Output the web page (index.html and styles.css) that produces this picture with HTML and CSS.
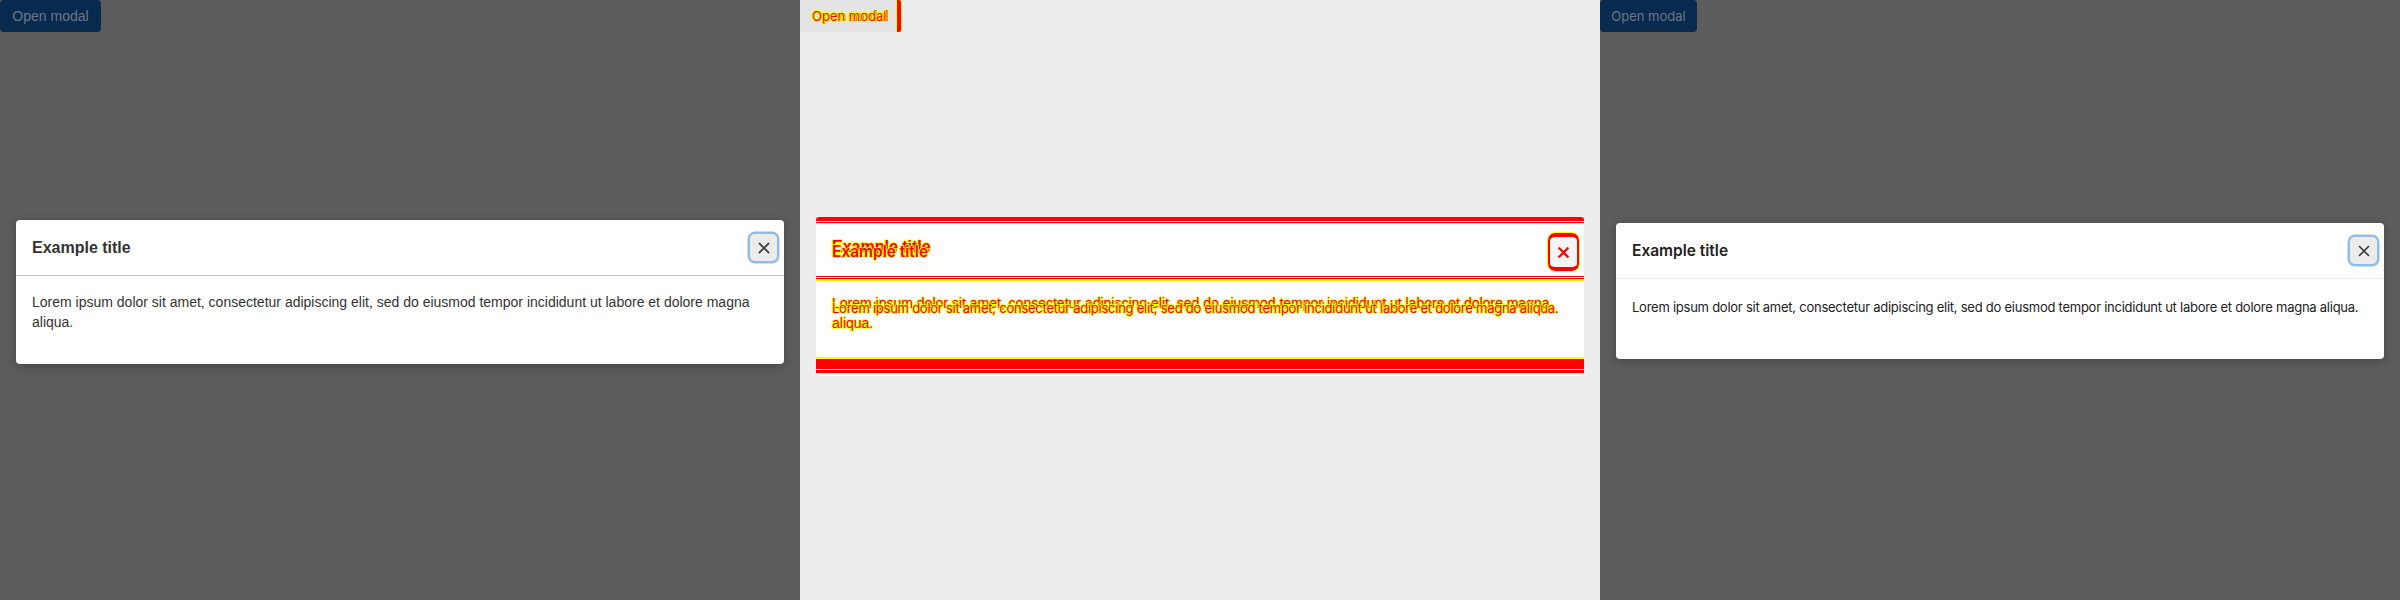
FILE: index.html
```html
<!DOCTYPE html>
<html>
<head>
<meta charset="utf-8">
<link rel="stylesheet" href="styles.css">
</head>
<body>
<div class="panels">
  <section class="panel panel-left">
    <button class="open-btn open-btn-left">Open modal</button>
    <div class="modal modal-left">
      <div class="modal-header">
        <h2 class="modal-title">Example title</h2>
        <button class="close-btn" aria-label="Close">
          <svg width="12" height="12" viewBox="0 0 12 12"><path d="M1.5 1.5 L10.5 10.5 M10.5 1.5 L1.5 10.5" stroke="#444" stroke-width="1.8" stroke-linecap="round"/></svg>
        </button>
      </div>
      <div class="modal-body">
        <p>Lorem ipsum dolor sit amet, consectetur adipiscing elit, sed do eiusmod tempor incididunt ut labore et dolore magna aliqua.</p>
      </div>
    </div>
  </section>

  <section class="panel panel-diff">
    <div class="diff-btn">
      <span class="diff-text diff-btn-a">Open modal</span>
      <span class="diff-text diff-btn-b">Open modal</span>
      <span class="diff-btn-edge"></span>
    </div>
    <div class="diff-modal">
      <div class="stripe s-top1"></div>
      <div class="stripe s-top2"></div>
      <div class="stripe s-top3"></div>
      <div class="stripe s-top4"></div>
      <div class="stripe s-div1"></div>
      <div class="stripe s-div2"></div>
      <div class="stripe s-div3"></div>
      <div class="stripe s-bot1"></div>
      <div class="stripe s-bot2"></div>
      <div class="stripe s-bot3"></div>
      <div class="stripe s-bot4"></div>
      <div class="stripe s-bot5"></div>
      <div class="diff-title diff-title-a diff-text">Example title</div>
      <div class="diff-title diff-title-b diff-text">Example title</div>
      <div class="diff-body diff-body-a diff-text">Lorem ipsum dolor sit amet, consectetur adipiscing elit, sed do eiusmod tempor incididunt ut labore et dolore magna aliqua.</div>
      <div class="diff-body diff-body-b diff-text">Lorem ipsum dolor sit amet, consectetur adipiscing elit, sed do eiusmod tempor incididunt ut labore et dolore magna aliqua.</div>
      <div class="diff-close">
        <svg width="11" height="11" viewBox="0 0 12 12"><path d="M1.5 1.5 L10.5 10.5 M10.5 1.5 L1.5 10.5" stroke="#ff0000" stroke-width="2.4" stroke-linecap="square"/></svg>
      </div>
    </div>
  </section>

  <section class="panel panel-right">
    <button class="open-btn open-btn-right">Open modal</button>
    <div class="modal modal-right">
      <div class="modal-header">
        <h2 class="modal-title">Example title</h2>
        <button class="close-btn" aria-label="Close">
          <svg width="12" height="12" viewBox="0 0 12 12"><path d="M1.5 1.5 L10.5 10.5 M10.5 1.5 L1.5 10.5" stroke="#333" stroke-width="1.6" stroke-linecap="round"/></svg>
        </button>
      </div>
      <div class="modal-body">
        <p>Lorem ipsum dolor sit amet, consectetur adipiscing elit, sed do eiusmod tempor incididunt ut labore et dolore magna aliqua.</p>
      </div>
    </div>
  </section>
</div>
</body>
</html>
```

FILE: styles.css
```css
html, body {
  margin: 0;
  padding: 0;
}
body {
  width: 2400px;
  height: 600px;
  overflow: hidden;
}
.panels {
  display: flex;
  width: 2400px;
  height: 600px;
}
.panel {
  width: 800px;
  height: 600px;
  flex: 0 0 800px;
  display: flex;
  flex-direction: column;
  align-items: flex-start;
  overflow: hidden;
}
.panel-left, .panel-right {
  background: #5c5c5c;
}
.panel-left {
  font-family: "Liberation Sans", Arial, sans-serif;
}
.panel-right {
  font-family: Inter, "Noto Sans", sans-serif;
}
.open-btn {
  height: 32px;
  border: 0;
  border-radius: 4px;
  background: #082a4f;
  color: #6c7885;
  font-size: 14px;
  padding: 0 12px;
  margin: 0;
  font-family: inherit;
  white-space: nowrap;
}
.open-btn-left {
  width: 101px;
}
.open-btn-right {
  width: 97px;
  font-size: 13px;
  padding: 0;
}
.modal {
  width: 768px;
  margin-left: 16px;
  background: #fff;
  border-radius: 4px;
  box-shadow: 0 2px 10px rgba(0, 0, 0, 0.25);
}
.modal-left {
  margin-top: 188px;
  color: #333;
}
.modal-right {
  margin-top: 191px;
  color: #222;
}
.modal-header {
  height: 56px;
  display: flex;
  align-items: center;
  justify-content: space-between;
  padding: 0 6px 0 16px;
  box-sizing: border-box;
}
.modal-left .modal-header {
  border-bottom: 1px solid #c4c4c4;
}
.modal-right .modal-header {
  border-bottom: 1px solid #ececec;
}
.modal-title {
  margin: 0;
  font-size: 16px;
  line-height: 20px;
  font-weight: 700;
}
.modal-right .modal-title {
  font-weight: 600;
  font-size: 15.5px;
}
.close-btn {
  width: 27px;
  height: 27px;
  padding: 0;
  border: 0;
  border-radius: 5px;
  background: #ececec;
  box-shadow: 0 0 0 2.5px #93bde8;
  display: flex;
  align-items: center;
  justify-content: center;
  margin-right: 1px;
}
.modal-body {
  padding: 16px;
  font-size: 14px;
}
.modal-body p {
  margin: 0 0 16px;
  line-height: 20px;
}
.modal-right .modal-body p {
  margin: 0 0 24px;
  line-height: 24px;
  font-size: 13px;
  letter-spacing: -0.25px;
  white-space: nowrap;
}

/* diff panel */
.panel-diff {
  background: #ededed;
  position: relative;
}
.diff-text {
  color: #ff0000;
  text-shadow: 1px 0 #ffff00, -1px 0 #ffff00, 0 1px #ffff00, 0 -1px #ffff00;
}
.diff-btn {
  position: relative;
  width: 101px;
  height: 32px;
  background: #e4e4e4;
  border-radius: 4px;
  font-size: 14px;
}
.diff-btn-a, .diff-btn-b {
  position: absolute;
  top: 0;
  line-height: 32px;
  white-space: nowrap;
}
.diff-btn-a {
  left: 12px;
  font-family: "Liberation Sans", Arial, sans-serif;
}
.diff-btn-b {
  left: 12px;
  font-size: 13px;
  font-family: Inter, sans-serif;
}
.diff-btn-edge {
  position: absolute;
  left: 96px;
  top: 0;
  width: 4px;
  height: 32px;
  background: #ff0000;
  border-left: 1px solid #ffff00;
  border-right: 1px solid #ffff00;
  border-radius: 0 3px 3px 0;
}
.diff-modal {
  position: relative;
  width: 768px;
  height: 159px;
  margin-left: 16px;
  margin-top: 185px;
  background: #fff;
  border-radius: 4px 4px 6px 6px;
}
.stripe {
  position: absolute;
  left: 0;
  right: 0;
}
.s-top1 { top: 0; height: 4px; background: #ff0000; border-radius: 3px 3px 0 0; }
.s-top2 { top: 4px; height: 1px; background: #ffff00; }
.s-top3 { top: 5px; height: 1px; background: #ff0000; }
.s-top4 { top: 6px; height: 1px; background: #ffff00; }
.s-div1 { top: 59px; height: 1px; background: #ff0000; }
.s-div2 { top: 61px; height: 1px; background: #ff0000; }
.s-div3 { top: 62px; height: 2px; background: #ffff00; }
.s-bot1 { top: 140px; height: 2px; background: #ffff00; }
.s-bot2 { top: 142px; height: 10px; background: #ff0000; }
.s-bot3 { top: 152px; height: 1px; background: #ffff00; }
.s-bot4 { top: 153px; height: 3px; background: #ff0000; }
.s-bot5 { top: 156px; height: 1px; background: #ffff00; }
.diff-title {
  position: absolute;
  left: 16px;
  line-height: 20px;
}
.diff-title-a {
  top: 20px;
  font-size: 16px;
  font-family: "Liberation Sans", Arial, sans-serif;
  font-weight: 700;
}
.diff-title-b {
  top: 25px;
  font-size: 15.5px;
  font-family: Inter, sans-serif;
  font-weight: 600;
}
.diff-body {
  position: absolute;
  left: 16px;
  width: 736px;
}
.diff-body-a {
  top: 76px;
  font-size: 14px;
  line-height: 20px;
  font-family: "Liberation Sans", Arial, sans-serif;
}
.diff-body-b {
  top: 79px;
  font-size: 13px;
  letter-spacing: -0.25px;
  line-height: 24px;
  white-space: nowrap;
  font-family: Inter, sans-serif;
}
.diff-close {
  position: absolute;
  left: 732px;
  top: 16px;
  width: 27px;
  height: 30px;
  background: #f4f4f4;
  border: 2px solid #ff0000;
  outline: 1px solid #ffff00;
  border-top-width: 4px;
  border-bottom-width: 4px;
  border-radius: 7px;
  display: flex;
  align-items: center;
  justify-content: center;
}
```
